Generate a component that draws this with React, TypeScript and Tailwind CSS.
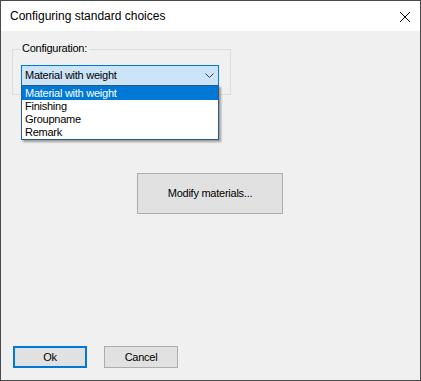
import React from "react";

export default function App() {
  const items = ["Material with weight", "Finishing", "Groupname", "Remark"];
  return (
    <div className="w-[421px] h-[381px] border border-[#4a4a4a] bg-[#f0f0f0] flex flex-col text-black" style={{ fontFamily: '"Liberation Sans", Arial, sans-serif' }}>
      <div className="h-[30px] bg-white flex items-center justify-between pl-[9px] pr-[9px] shrink-0">
        <span className="text-[12px] text-black">
          Configuring standard choices
        </span>
        <svg width="12" height="12" viewBox="0 0 12 12" className="mt-[1px]">
          <path d="M1 1 L11 11 M11 1 L1 11" stroke="#000" strokeWidth="1" />
        </svg>
      </div>
      <div className="flex-1 flex flex-col tracking-[-0.25px]">
        <div className="ml-[11px] mt-[18px] w-[219px] h-[46px] border border-[#dcdcdc] relative pl-[8px] pt-[15px]">
          <span className="absolute -top-[8px] left-[7px] bg-[#f0f0f0] px-[2px] text-[11px] leading-[13px]">
            Configuration:
          </span>
          <div className="w-[198px] h-[21px] border border-[#0078d7] bg-[#cce4f7] flex items-center justify-between pl-[3px] pr-[4px] text-[11px]">
            <span>Material with weight</span>
            <svg width="9" height="6" viewBox="0 0 9 6">
              <path d="M0.5 0.5 L4.5 4.5 L8.5 0.5" stroke="#3c3c3c" strokeWidth="1" fill="none" />
            </svg>
          </div>
          <div className="absolute left-[8px] top-[35px] w-[198px] border border-[#2b5a86] bg-white shadow-[2px_2px_2px_rgba(0,0,0,0.35)] z-10">
            {items.map((it, i) => (
              <div
                key={it}
                className={
                  "pl-[3px] text-[11px] " +
                  (i === 0 ? "bg-[#0078d7] text-white h-[14px] leading-[14px]" : "text-black h-[13px] leading-[13px]")
                }
              >
                {it}
              </div>
            ))}
          </div>
        </div>
        <div className="flex justify-center mt-[78px]">
          <button className="w-[146px] h-[41px] border border-[#adadad] bg-[#e1e1e1] text-[11px] ml-[-1px]">
            Modify materials...
          </button>
        </div>
        <div className="mt-auto mb-[12px] ml-[12px] flex gap-[17px]">
          <button className="w-[74px] h-[22px] border-2 border-[#0078d7] bg-[#e1e1e1] text-[11px]">Ok</button>
          <button className="w-[74px] h-[22px] border border-[#adadad] bg-[#e1e1e1] text-[11px]">Cancel</button>
        </div>
      </div>
    </div>
  );
}
